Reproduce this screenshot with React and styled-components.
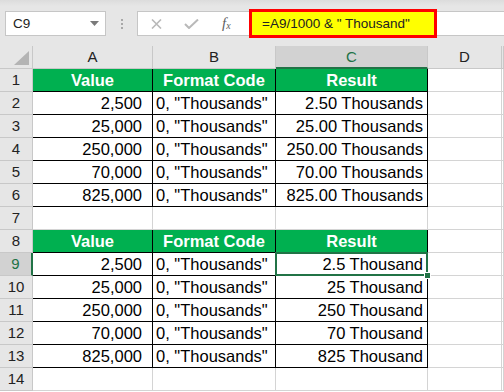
import React from 'react'
import styled, { createGlobalStyle } from 'styled-components'

const GlobalStyle = createGlobalStyle`
  body {
    margin: 0;
    background: #fff;
    font-family: "Liberation Sans", Arial, sans-serif;
  }
`

const green = '#217346'

const columns = ['A', 'B', 'C', 'D', '']

const firstTable = [
  ['2,500', '2.50 Thousands'],
  ['25,000', '25.00 Thousands'],
  ['250,000', '250.00 Thousands'],
  ['70,000', '70.00 Thousands'],
  ['825,000', '825.00 Thousands'],
]

const secondTable = [
  ['2,500', '2.5 Thousand'],
  ['25,000', '25 Thousand'],
  ['250,000', '250 Thousand'],
  ['70,000', '70 Thousand'],
  ['825,000', '825 Thousand'],
]

function buildRows() {
  const rows = []
  const pushTable = (data) => {
    rows.push({ kind: 'head' })
    data.forEach(([value, result]) => rows.push({ kind: 'data', value, result }))
  }
  pushTable(firstTable)
  rows.push({ kind: 'blank' })
  pushTable(secondTable)
  rows.push({ kind: 'blank', last: true })
  return rows
}

function App() {
  const rows = buildRows()

  return (
    <>
      <GlobalStyle />
      <Toolbar>
        <NameBox>
          C9
          <svg width="9" height="5" viewBox="0 0 9 5">
            <path d="M0 0h9L4.5 5z" fill="#7a7a7a" />
          </svg>
        </NameBox>
        <Grip>
          <span /><span /><span />
        </Grip>
        <FormulaBar>
          <IconArea>
            <svg width="11" height="10" viewBox="0 0 11 10">
              <path d="M1 0.5l9 9M10 0.5l-9 9" stroke="#b9b9b9" strokeWidth="1.6" fill="none" />
            </svg>
            <svg width="15" height="10" viewBox="0 0 15 10">
              <path d="M1 5l4 4 9-8.5" stroke="#b9b9b9" strokeWidth="2" fill="none" />
            </svg>
            <Fx>f<sub>x</sub></Fx>
          </IconArea>
          <FormulaBox>=A9/1000 &amp; " Thousand"</FormulaBox>
        </FormulaBar>
      </Toolbar>

      <Sheet>
        <Corner>
          <svg width="15" height="14" viewBox="0 0 15 14">
            <path d="M15 0V14H0z" fill="#b4b4b4" />
          </svg>
        </Corner>
        {columns.map((c, i) => (
          <ColHead key={i} $active={c === 'C'}>{c}</ColHead>
        ))}

        {rows.map((row, i) => {
          const n = i + 1
          const active = n === 9
          if (row.kind === 'head') {
            return (
              <React.Fragment key={n}>
                <RowHead $active={active}>{n}</RowHead>
                <HeadCell>Value</HeadCell>
                <HeadCell>Format Code</HeadCell>
                <HeadCell>Result</HeadCell>
                <Cell />
                <Cell />
              </React.Fragment>
            )
          }
          if (row.kind === 'data') {
            return (
              <React.Fragment key={n}>
                <RowHead $active={active}>{n}</RowHead>
                <DataCell $align="right" $pad="10px">{row.value}</DataCell>
                <DataCell $align="left" $pad="3px">0, "Thousands"</DataCell>
                <DataCell $align="right" $pad="4px">
                  {row.result}
                  {active && <Selection><Handle /></Selection>}
                </DataCell>
                <Cell />
                <Cell />
              </React.Fragment>
            )
          }
          return (
            <React.Fragment key={n}>
              <RowHead>{n}</RowHead>
              <Cell /><Cell /><Cell /><Cell /><Cell />
            </React.Fragment>
          )
        })}
      </Sheet>
    </>
  )
}

export default App

const Toolbar = styled.div`
  display: flex;
  align-items: flex-start;
  height: 46px;
  box-sizing: border-box;
  padding: 11px 0 0 5px;
  background: linear-gradient(#dcdcdc 0px, #e6e6e6 6px, #e6e6e6 100%);
`

const NameBox = styled.div`
  display: flex;
  align-items: center;
  justify-content: space-between;
  width: 101px;
  height: 25px;
  box-sizing: border-box;
  padding: 0 6px 0 7px;
  background: #fff;
  border: 1px solid #c6c6c6;
  font-size: 13.5px;
  color: #222;
`

const Grip = styled.div`
  width: 31px;
  height: 25px;
  display: flex;
  flex-direction: column;
  align-items: center;
  justify-content: center;
  gap: 2px;

  span {
    width: 2px;
    height: 2px;
    background: #a8a8a8;
  }
`

const FormulaBar = styled.div`
  flex: 1;
  display: flex;
  align-items: center;
  height: 25px;
  box-sizing: border-box;
  background: #fff;
  border: 1px solid #c6c6c6;
  border-right: none;
`

const IconArea = styled.div`
  width: 111px;
  display: flex;
  align-items: center;
  padding-left: 13px;
  box-sizing: border-box;

  svg:nth-child(2) {
    margin-left: 22px;
  }
`

const Fx = styled.span`
  margin-left: 23px;
  font-family: "Liberation Serif", "Times New Roman", serif;
  font-style: italic;
  font-size: 15px;
  color: #5f5f5f;

  sub {
    font-size: 10px;
    vertical-align: -1px;
  }
`

const FormulaBox = styled.div`
  width: 188px;
  height: 29px;
  box-sizing: border-box;
  margin: -2px 0;
  border: 3px solid #ff0000;
  background: #ffff00;
  display: flex;
  align-items: center;
  padding-left: 10px;
  font-size: 13.5px;
  color: #222;
`

const Sheet = styled.div`
  display: grid;
  grid-template-columns: 33px 120px 123px 152px 74px 1fr;
  grid-auto-rows: 23px;
`

const Cell = styled.div`
  position: relative;
  box-sizing: border-box;
  border-right: 1px solid #d4d4d4;
  border-bottom: 1px solid #d4d4d4;
  font-size: 16.5px;
  line-height: 22px;
  white-space: nowrap;
  color: #000;
`

const Corner = styled(Cell)`
  background: #e6e6e6;
  border-color: #c8c8c8;
  display: flex;
  align-items: flex-end;
  justify-content: flex-end;
  padding: 0 3px 3px 0;
`

const ColHead = styled(Cell)`
  background: ${(p) => (p.$active ? '#d2d2d2' : '#e6e6e6')};
  border-right-color: #c8c8c8;
  border-bottom: ${(p) => (p.$active ? `2px solid ${green}` : '1px solid #c8c8c8')};
  color: ${(p) => (p.$active ? green : '#222')};
  font-size: 15px;
  text-align: center;
  line-height: 22px;
`

const RowHead = styled(Cell)`
  background: ${(p) => (p.$active ? '#d2d2d2' : '#e6e6e6')};
  border-bottom-color: #c8c8c8;
  border-right: ${(p) => (p.$active ? `2px solid ${green}` : '1px solid #c8c8c8')};
  color: ${(p) => (p.$active ? green : '#222')};
  font-size: 15px;
  text-align: center;
`

const HeadCell = styled(Cell)`
  background: #00b050;
  border-color: #000;
  color: #fff;
  font-weight: bold;
  text-align: center;
`

const DataCell = styled(Cell)`
  border-color: #000;
  text-align: ${(p) => p.$align};
  padding: ${(p) => (p.$align === 'right' ? `0 ${p.$pad} 0 0` : `0 0 0 ${p.$pad}`)};
`

const Selection = styled.div`
  position: absolute;
  top: -1px;
  left: -1px;
  right: -1px;
  bottom: -1px;
  border: 2px solid ${green};
  z-index: 2;
`

const Handle = styled.div`
  position: absolute;
  right: -5px;
  bottom: -5px;
  width: 5px;
  height: 5px;
  background: ${green};
  border: 1px solid #fff;
`
